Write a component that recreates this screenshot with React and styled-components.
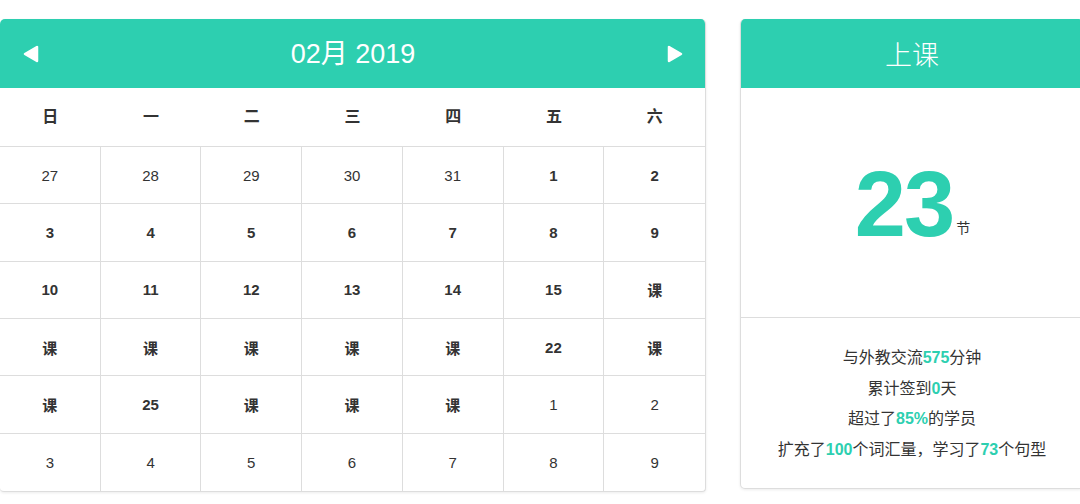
import styled, { createGlobalStyle } from "styled-components";

const GREEN = "#2dcfb0";

const GlobalStyle = createGlobalStyle`
  html, body {
    margin: 0;
    padding: 0;
    background: #ffffff;
    overflow: hidden;
  }
  body {
    font-family: "Liberation Sans", "Noto Sans CJK SC", Arial, sans-serif;
    color: #333333;
  }
`;

const Page = styled.div`
  display: flex;
  align-items: flex-start;
  gap: 34px;
  padding: 19px 0 12px;
  width: 100%;
  overflow: hidden;
`;

const Calendar = styled.div`
  width: 706px;
  flex-shrink: 0;
  box-sizing: border-box;
  border: 1px solid #dddddd;
  border-top: none;
  border-left: none;
  border-radius: 5px 5px 4px 4px;
  box-shadow: 0 1px 3px rgba(0, 0, 0, 0.08);
  overflow: hidden;
  background: #fff;
`;

const CalHeader = styled.div`
  height: 69px;
  background: ${GREEN};
  display: flex;
  align-items: center;
  justify-content: space-between;
  padding: 0 21px 0 22px;
  color: #fff;
`;

const Title = styled.div`
  font-size: 27px;
  line-height: 1;
  margin-top: 1px;
`;

const Arrow = styled.svg`
  width: 18px;
  height: 18px;
  display: block;
  margin-top: 1px;
`;

const WeekRow = styled.div`
  display: grid;
  grid-template-columns: repeat(7, 1fr);
  height: 58px;
  border-bottom: 1px solid #dddddd;
`;

const WeekDay = styled.div`
  display: flex;
  align-items: center;
  justify-content: center;
  font-size: 16px;
  font-weight: 700;
  color: #333;
  padding-bottom: 4px;
`;

const Grid = styled.div`
  display: grid;
  grid-template-columns: repeat(7, 1fr);
  grid-auto-rows: 57.33px;
`;

const Cell = styled.div`
  display: flex;
  align-items: center;
  justify-content: center;
  box-sizing: border-box;
  font-size: 15px;
  font-weight: ${(p) => (p.$muted ? 400 : 700)};
  color: #333;
  border-right: ${(p) => (p.$last ? "none" : "1px solid #dddddd")};
  border-bottom: ${(p) => (p.$bottom ? "none" : "1px solid #dddddd")};
`;

const Side = styled.div`
  width: 344px;
  flex-shrink: 0;
  box-sizing: border-box;
  border: 1px solid #dddddd;
  border-top: none;
  border-radius: 5px;
  box-shadow: 0 1px 3px rgba(0, 0, 0, 0.08);
  overflow: hidden;
  background: #fff;
`;

const SideHeader = styled.div`
  height: 69px;
  margin: 0 -1px;
  background: ${GREEN};
  color: #fff;
  display: flex;
  align-items: center;
  justify-content: center;
  font-family: "Liberation Serif", "Noto Sans CJK SC", serif;
  font-size: 27px;
  font-weight: 300;
`;

const Count = styled.div`
  height: 230px;
  border-bottom: 1px solid #dddddd;
  display: flex;
  align-items: center;
  justify-content: center;
  padding-top: 2px;
  box-sizing: border-box;
`;

const CountInner = styled.div`
  display: flex;
  align-items: baseline;
  margin-left: 1px;
`;

const Big = styled.span`
  font-size: 92px;
  font-weight: 700;
  color: ${GREEN};
  line-height: 1;
  letter-spacing: -2px;
`;

const Unit = styled.span`
  font-size: 14px;
  color: #333;
  margin-left: 3px;
  position: relative;
  top: -3px;
`;

const Stats = styled.div`
  height: 170px;
  display: flex;
  flex-direction: column;
  justify-content: center;
  align-items: center;
  padding-top: 2px;
  box-sizing: border-box;
`;

const Line = styled.div`
  font-size: 16px;
  line-height: 30.5px;
  color: #333;
`;

const Hl = styled.b`
  color: ${GREEN};
  font-weight: 700;
`;

const weekDays = ["日", "一", "二", "三", "四", "五", "六"];

const days = [
  ["27", 1], ["28", 1], ["29", 1], ["30", 1], ["31", 1], ["1"], ["2"],
  ["3"], ["4"], ["5"], ["6"], ["7"], ["8"], ["9"],
  ["10"], ["11"], ["12"], ["13"], ["14"], ["15"], ["课"],
  ["课"], ["课"], ["课"], ["课"], ["课"], ["22"], ["课"],
  ["课"], ["25"], ["课"], ["课"], ["课"], ["1", 1], ["2", 1],
  ["3", 1], ["4", 1], ["5", 1], ["6", 1], ["7", 1], ["8", 1], ["9", 1],
];

export default function App() {
  return (
    <>
      <GlobalStyle />
      <Page>
        <Calendar>
          <CalHeader>
            <Arrow viewBox="0 0 18 18">
              <polygon
                points="15,2 15,16 3,9"
                fill="#fff"
                stroke="#fff"
                strokeWidth="2.5"
                strokeLinejoin="round"
              />
            </Arrow>
            <Title>02月 2019</Title>
            <Arrow viewBox="0 0 18 18">
              <polygon
                points="3,2 3,16 15,9"
                fill="#fff"
                stroke="#fff"
                strokeWidth="2.5"
                strokeLinejoin="round"
              />
            </Arrow>
          </CalHeader>
          <WeekRow>
            {weekDays.map((d) => (
              <WeekDay key={d}>{d}</WeekDay>
            ))}
          </WeekRow>
          <Grid>
            {days.map(([t, muted], i) => (
              <Cell
                key={i}
                $muted={!!muted}
                $last={i % 7 === 6}
                $bottom={i >= 35}
              >
                {t}
              </Cell>
            ))}
          </Grid>
        </Calendar>
        <Side>
          <SideHeader>上课</SideHeader>
          <Count>
            <CountInner>
              <Big>23</Big>
              <Unit>节</Unit>
            </CountInner>
          </Count>
          <Stats>
            <Line>
              与外教交流<Hl>575</Hl>分钟
            </Line>
            <Line>
              累计签到<Hl>0</Hl>天
            </Line>
            <Line>
              超过了<Hl>85%</Hl>的学员
            </Line>
            <Line>
              扩充了<Hl>100</Hl>个词汇量，学习了<Hl>73</Hl>个句型
            </Line>
          </Stats>
        </Side>
      </Page>
    </>
  );
}
